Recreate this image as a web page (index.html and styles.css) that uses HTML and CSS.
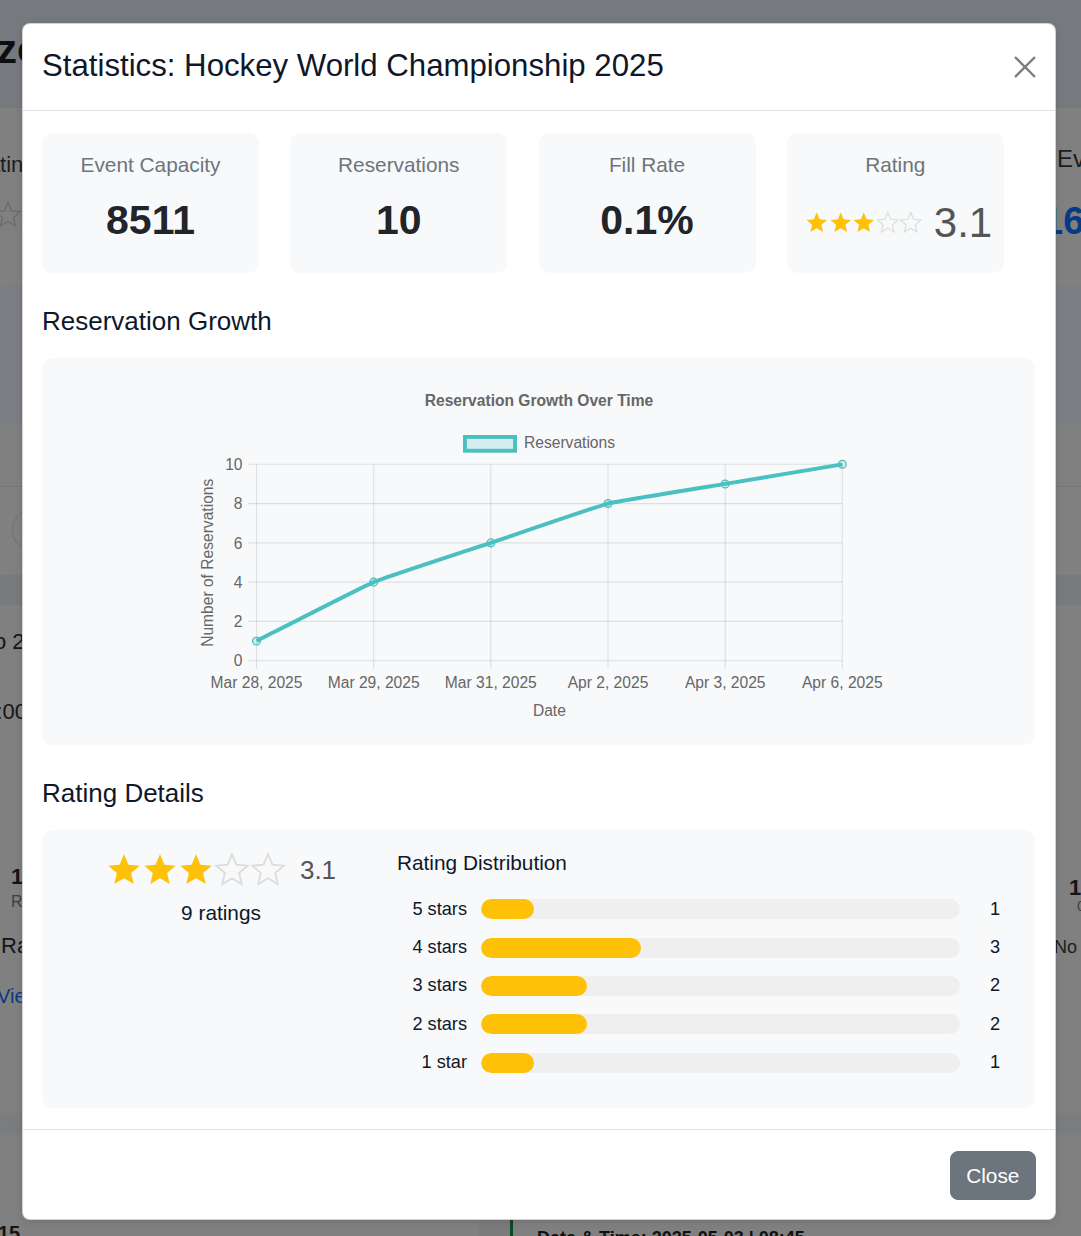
FILE: index.html
```html
<!DOCTYPE html>
<html lang="en">
<head>
<meta charset="utf-8">
<title>Statistics: Hockey World Championship 2025</title>
<link rel="stylesheet" href="styles.css">
</head>
<body>
<svg class="defs" width="0" height="0" aria-hidden="true">
  <defs>
    <symbol id="star" viewBox="0 0 24 24">
      <polygon points="12,1.5 14.94,8.45 22.46,9.1 16.76,14.05 18.47,21.4 12,17.5 5.53,21.4 7.24,14.05 1.54,9.1 9.06,8.45"/>
    </symbol>
  </defs>
</svg>

<div class="page" aria-hidden="true">
  <div class="bg-col bg-left">
    <span class="f-logo">zo</span>
    <span class="f-tin">Rating</span>
    <span class="f-star"><svg class="star-outline" width="30" height="30"><use href="#star"/></svg></span>
    <span class="f-circle"></span>
    <span class="f-expo">Expo 2025</span>
    <span class="f-time">13:00</span>
    <span class="f-num">1</span>
    <span class="f-small">R</span>
    <span class="f-ra">Ra</span>
    <span class="f-view">View</span>
    <span class="f-bottom">15</span>
  </div>
  <div class="bg-mid">
    <div class="bg-bottom-row">
      <span class="bg-divider"></span>
      <span class="bg-green"></span>
      <span class="bg-date">Date &amp; Time: 2025-05-03 | 08:45</span>
    </div>
  </div>
  <div class="bg-col bg-right">
    <span class="r-ev">Ev</span>
    <span class="r-big">16</span>
    <span class="r-stat"><span class="r-bar"></span><span class="r-one">1</span></span>
    <span class="r-small">0</span>
    <span class="r-no">No r</span>
  </div>
</div>

<div class="modal">
  <div class="modal-header">
    <h2 class="modal-title">Statistics: Hockey World Championship 2025</h2>
    <button class="btn-close" type="button" aria-label="Close">
      <svg width="22" height="22" viewBox="0 0 22 22"><path d="M1 1 L21 21 M21 1 L1 21"/></svg>
    </button>
  </div>

  <div class="modal-body">
    <div class="stats">
      <div class="stat-card">
        <div class="stat-label">Event Capacity</div>
        <div class="stat-value">8511</div>
      </div>
      <div class="stat-card">
        <div class="stat-label">Reservations</div>
        <div class="stat-value">10</div>
      </div>
      <div class="stat-card">
        <div class="stat-label">Fill Rate</div>
        <div class="stat-value">0.1%</div>
      </div>
      <div class="stat-card">
        <div class="stat-label">Rating</div>
        <div class="stat-rating">
          <span class="stars-sm">
            <svg class="star-on"><use href="#star"/></svg>
            <svg class="star-on"><use href="#star"/></svg>
            <svg class="star-on"><use href="#star"/></svg>
            <svg class="star-off"><use href="#star"/></svg>
            <svg class="star-off"><use href="#star"/></svg>
          </span>
          <span class="rating-num">3.1</span>
        </div>
      </div>
    </div>

    <h3 class="section-title">Reservation Growth</h3>
    <div class="chart-box">
      <svg class="chart" width="993" height="387" viewBox="0 0 993 387">
        <text class="c-title" x="497" y="48" text-anchor="middle">Reservation Growth Over Time</text>
        <rect x="422.95" y="78.95" width="50.1" height="13.8" class="legend-box"/>
        <text class="c-text" x="482" y="90.2">Reservations</text>

        <g class="grid">
          <line x1="206" y1="106.3" x2="800.3" y2="106.3"/>
          <line x1="206" y1="145.58" x2="800.3" y2="145.58"/>
          <line x1="206" y1="184.86" x2="800.3" y2="184.86"/>
          <line x1="206" y1="224.14" x2="800.3" y2="224.14"/>
          <line x1="206" y1="263.42" x2="800.3" y2="263.42"/>
          <line x1="206" y1="302.7" x2="800.3" y2="302.7"/>
          <line x1="214.5" y1="106.3" x2="214.5" y2="311"/>
          <line x1="331.7" y1="106.3" x2="331.7" y2="311"/>
          <line x1="448.8" y1="106.3" x2="448.8" y2="311"/>
          <line x1="566" y1="106.3" x2="566" y2="311"/>
          <line x1="683.2" y1="106.3" x2="683.2" y2="311"/>
          <line x1="800.3" y1="106.3" x2="800.3" y2="311"/>
        </g>

        <g class="c-text" text-anchor="end">
          <text x="200.5" y="111.9">10</text>
          <text x="200.5" y="151.2">8</text>
          <text x="200.5" y="190.5">6</text>
          <text x="200.5" y="229.7">4</text>
          <text x="200.5" y="269">2</text>
          <text x="200.5" y="308.3">0</text>
        </g>

        <g class="c-text" text-anchor="middle">
          <text x="214.5" y="329.5">Mar 28, 2025</text>
          <text x="331.7" y="329.5">Mar 29, 2025</text>
          <text x="448.8" y="329.5">Mar 31, 2025</text>
          <text x="566" y="329.5">Apr 2, 2025</text>
          <text x="683.2" y="329.5">Apr 3, 2025</text>
          <text x="800.3" y="329.5">Apr 6, 2025</text>
          <text x="507.4" y="358">Date</text>
          <text transform="translate(170.5 204.8) rotate(-90)" x="0" y="0">Number of Reservations</text>
        </g>

        <path class="c-line" d="M214.5,283.06 C226.22,277.17 319.63,229.2 331.7,224.14 C343.06,219.38 437.08,188.79 448.8,184.86 C460.52,180.93 554.05,148.58 566,145.58 C577.49,142.69 671.48,127.9 683.2,125.94 C694.92,123.98 788.59,108.26 800.3,106.3"/>
        <g class="c-points">
          <circle cx="214.5" cy="283.06" r="3.9"/>
          <circle cx="331.7" cy="224.14" r="3.9"/>
          <circle cx="448.8" cy="184.86" r="3.9"/>
          <circle cx="566" cy="145.58" r="3.9"/>
          <circle cx="683.2" cy="125.94" r="3.9"/>
          <circle cx="800.3" cy="106.3" r="3.9"/>
        </g>
      </svg>
    </div>

    <h3 class="section-title">Rating Details</h3>
    <div class="rating-box">
      <div class="rating-summary">
        <div class="stars-row">
          <span class="stars-lg">
            <svg class="star-on"><use href="#star"/></svg>
            <svg class="star-on"><use href="#star"/></svg>
            <svg class="star-on"><use href="#star"/></svg>
            <svg class="star-off"><use href="#star"/></svg>
            <svg class="star-off"><use href="#star"/></svg>
          </span>
          <span class="summary-num">3.1</span>
        </div>
        <div class="summary-count">9 ratings</div>
      </div>
      <div class="distribution">
        <h4 class="dist-title">Rating Distribution</h4>
        <div class="dist-row">
          <span class="dist-label">5 stars</span>
          <span class="dist-track"><span class="dist-fill" style="width: 11.11%"></span></span>
          <span class="dist-count">1</span>
        </div>
        <div class="dist-row">
          <span class="dist-label">4 stars</span>
          <span class="dist-track"><span class="dist-fill" style="width: 33.33%"></span></span>
          <span class="dist-count">3</span>
        </div>
        <div class="dist-row">
          <span class="dist-label">3 stars</span>
          <span class="dist-track"><span class="dist-fill" style="width: 22.22%"></span></span>
          <span class="dist-count">2</span>
        </div>
        <div class="dist-row">
          <span class="dist-label">2 stars</span>
          <span class="dist-track"><span class="dist-fill" style="width: 22.22%"></span></span>
          <span class="dist-count">2</span>
        </div>
        <div class="dist-row">
          <span class="dist-label">1 star</span>
          <span class="dist-track"><span class="dist-fill" style="width: 11.11%"></span></span>
          <span class="dist-count">1</span>
        </div>
      </div>
    </div>
  </div>

  <div class="modal-footer">
    <button class="btn-secondary" type="button">Close</button>
  </div>
</div>
</body>
</html>
```

FILE: styles.css
```css
* { box-sizing: border-box; }

html, body {
  margin: 0;
  padding: 0;
}

body {
  width: 1081px;
  height: 1236px;
  overflow: hidden;
  position: relative;
  font-family: "Liberation Sans", Arial, sans-serif;
  background: #808080;
}

.defs {
  position: absolute;
  width: 0;
  height: 0;
  overflow: hidden;
}

/* ---------- dimmed page behind the modal ---------- */
.page {
  display: grid;
  grid-template-columns: 22px 1034px 25px;
  height: 1236px;
  overflow: hidden;
  background: linear-gradient(to bottom,
    #76797e 0 108px,
    #808080 108px 285px,
    #7b7e84 285px 425px,
    #808080 425px 486px,
    #767676 486px 487px,
    #808080 487px 575px,
    #787a7e 575px 605px,
    #808080 605px 1113px,
    #7a7c80 1113px 1135px,
    #808080 1135px);
}

.bg-col {
  display: flex;
  flex-direction: column;
  overflow: hidden;
  white-space: nowrap;
  color: #151515;
}

.bg-left > span { flex: none; display: block; }
.bg-right > span { flex: none; display: block; }

.f-logo {
  height: 108px;
  padding-top: 26px;
  margin-left: -3px;
  font-size: 40px;
  line-height: 46px;
  font-weight: 700;
  color: #0e0e0e;
}
.f-tin {
  margin-top: 32px;
  height: 50px;
  line-height: 50px;
  font-size: 22px;
  margin-left: -28px;
  color: #1d1d1d;
}
.f-star {
  height: 50px;
  display: flex !important;
  align-items: center;
  margin-left: -6px;
}
.star-outline { fill: none; stroke: #6a6a6a; stroke-width: 1.1; }
.f-circle {
  margin-top: 268px;
  width: 44px;
  height: 44px;
  margin-left: 12px;
  border: 1px solid #727272;
  border-radius: 50%;
}
.f-expo {
  margin-top: 65px;
  height: 50px;
  line-height: 50px;
  font-size: 22px;
  margin-left: -44px;
}
.f-time {
  margin-top: 20px;
  height: 50px;
  line-height: 50px;
  font-size: 22px;
  margin-left: -28px;
}
.f-num {
  margin-top: 125px;
  height: 30px;
  line-height: 30px;
  font-size: 22px;
  font-weight: 700;
  margin-left: 11px;
}
.f-small {
  height: 20px;
  line-height: 20px;
  font-size: 16px;
  margin-left: 11px;
  color: #3f3f3f;
}
.f-ra {
  margin-top: 19px;
  height: 30px;
  line-height: 30px;
  font-size: 22px;
  margin-left: 1px;
}
.f-view {
  margin-top: 20px;
  height: 30px;
  line-height: 30px;
  font-size: 20px;
  margin-left: -3px;
  color: #0a3a80;
}
.f-bottom {
  margin-top: 207px;
  height: 30px;
  line-height: 30px;
  font-size: 20px;
  font-weight: 700;
  margin-left: -2px;
}

.bg-mid {
  display: flex;
  flex-direction: column;
  justify-content: flex-end;
}
.bg-bottom-row {
  display: flex;
  align-items: flex-start;
  height: 16px;
  overflow: hidden;
  padding-left: 457px;
}
.bg-divider {
  width: 31px;
  height: 16px;
  background: #7b7b7b;
}
.bg-green {
  width: 3px;
  height: 16px;
  background: #0c4a25;
}
.bg-date {
  margin-left: 24px;
  padding-top: 8px;
  font-size: 18px;
  line-height: 20px;
  font-weight: 700;
  color: #111;
  white-space: nowrap;
}

.r-ev {
  margin-top: 134px;
  height: 50px;
  line-height: 50px;
  font-size: 24px;
  margin-left: 1px;
  color: #1d1d1d;
}
.r-big {
  margin-top: 12px;
  height: 50px;
  line-height: 50px;
  font-size: 38px;
  font-weight: 700;
  margin-left: -14px;
  color: #073a84;
}
.r-stat {
  margin-top: 631px;
  height: 21px;
  display: flex !important;
  align-items: center;
}
.r-bar {
  width: 6px;
  height: 21px;
  background: #0d5226;
}
.r-one {
  margin-left: 13px;
  font-size: 22px;
  font-weight: 700;
  line-height: 21px;
}
.r-small {
  height: 16px;
  line-height: 16px;
  font-size: 15px;
  margin-left: 21px;
  color: #3f3f3f;
}
.r-no {
  margin-top: 18px;
  height: 30px;
  line-height: 30px;
  font-size: 18px;
  margin-left: -2px;
  color: #1d1d1d;
}

/* ---------- modal ---------- */
.modal {
  position: absolute;
  top: 23px;
  left: 22px;
  width: 1034px;
  background: #fff;
  border: 1px solid rgba(0, 0, 0, 0.18);
  border-radius: 8px;
  box-shadow: 0 2px 8px rgba(0, 0, 0, 0.12);
  color: #0f172a;
}

.modal-header {
  display: flex;
  align-items: flex-start;
  justify-content: space-between;
  padding: 23px 19px 26px 19px;
  border-bottom: 1px solid #dee2e6;
}

.modal-title {
  margin: 0;
  font-size: 31.2px;
  line-height: 37px;
  font-weight: 400;
  color: #0f172a;
}

.btn-close {
  margin-top: 8.5px;
  padding: 0;
  width: 22px;
  height: 22px;
  border: 0;
  background: none;
  display: block;
}
.btn-close svg { display: block; }
.btn-close path {
  stroke: #7b7f83;
  stroke-width: 2.4;
  fill: none;
}

.modal-body {
  padding: 22px 20px 21.5px 19px;
}

.stats {
  display: grid;
  grid-template-columns: repeat(4, 1fr);
}

.stat-card {
  margin-right: 31.2px;
  height: 140px;
  padding-top: 16px;
  background: #f8f9fa;
  border-radius: 10px;
  display: flex;
  flex-direction: column;
  align-items: center;
  text-align: center;
}

.stat-label {
  font-size: 20.8px;
  line-height: 31px;
  color: #6c757d;
}

.stat-value {
  margin-top: 15px;
  font-size: 41px;
  line-height: 50px;
  font-weight: 700;
  color: #212529;
}

.stat-rating {
  margin-top: 18px;
  padding-left: 7px;
  height: 50px;
  display: flex;
  align-items: center;
  justify-content: center;
}

.stars-sm {
  display: flex;
  align-items: center;
}
.stars-sm svg {
  width: 23.5px;
  height: 23.5px;
  display: block;
}

.rating-num {
  margin-left: 11px;
  font-size: 42px;
  line-height: 50px;
  color: #555;
}

.star-on { fill: #ffc107; }
.star-off { fill: none; stroke: #dcdcdc; stroke-width: 1.2; }

.section-title {
  margin: 32.7px 0 21.1px;
  font-size: 26px;
  line-height: 31.2px;
  font-weight: 400;
  color: #0f172a;
}

.chart-box {
  height: 387px;
  background: #f8f9fa;
  border-radius: 10px;
}

.chart { display: block; }

.c-title {
  font-family: "Liberation Sans", Arial, sans-serif;
  font-size: 15.6px;
  font-weight: 700;
  fill: #666;
}

.c-text {
  font-family: "Liberation Sans", Arial, sans-serif;
  font-size: 15.6px;
  fill: #666;
}

.legend-box {
  fill: rgba(75, 192, 192, 0.2);
  stroke: #4bc0c0;
  stroke-width: 3.9;
}

.grid line {
  stroke: rgba(0, 0, 0, 0.1);
  stroke-width: 1.1;
}

.c-line {
  fill: none;
  stroke: #4bc0c0;
  stroke-width: 3.9;
  stroke-linejoin: round;
}

.c-points circle {
  fill: rgba(75, 192, 192, 0.2);
  stroke: #4bc0c0;
  stroke-width: 1.3;
}

.rating-box {
  display: grid;
  grid-template-columns: 318px 1fr;
  padding: 20px 20px 20.5px 20px;
  background: #f8f9fa;
  border-radius: 10px;
}

.rating-summary {
  display: flex;
  flex-direction: column;
  align-items: center;
}

.stars-row {
  height: 40px;
  display: flex;
  align-items: center;
}

.stars-lg {
  display: flex;
  align-items: center;
}
.stars-lg svg {
  width: 36px;
  height: 36px;
  display: block;
}

.summary-num {
  margin-left: 14px;
  font-size: 26px;
  line-height: 30px;
  color: #555;
}

.summary-count {
  margin-top: 7.4px;
  font-size: 20.8px;
  line-height: 31.2px;
  color: #0f172a;
}

.distribution {
  padding-left: 17px;
}

.dist-title {
  margin: 0 0 20.8px;
  font-size: 20.8px;
  line-height: 25px;
  font-weight: 400;
  color: #0f172a;
}

.dist-row {
  height: 27.3px;
  margin-bottom: 11px;
  display: flex;
  align-items: center;
}

.dist-label {
  width: 70px;
  margin-right: 14px;
  text-align: right;
  font-size: 18.2px;
  line-height: 27.3px;
  color: #0f172a;
}

.dist-track {
  flex: 1;
  height: 20px;
  border-radius: 10px;
  background: #efefef;
  overflow: hidden;
  display: flex;
}

.dist-fill {
  height: 20px;
  border-radius: 10px;
  background: #ffc107;
  display: block;
}

.dist-count {
  width: 40px;
  margin-left: 15px;
  text-align: center;
  font-size: 18.2px;
  line-height: 27.3px;
  color: #0f172a;
}

.modal-footer {
  display: flex;
  justify-content: flex-end;
  padding: 21px 19px 19px;
  border-top: 1px solid #dee2e6;
}

.btn-secondary {
  font-family: "Liberation Sans", Arial, sans-serif;
  font-size: 20.8px;
  line-height: 31.2px;
  padding: 7.8px 15.6px;
  color: #fff;
  background: #6c757d;
  border: 1px solid #6c757d;
  border-radius: 8px;
}
```
